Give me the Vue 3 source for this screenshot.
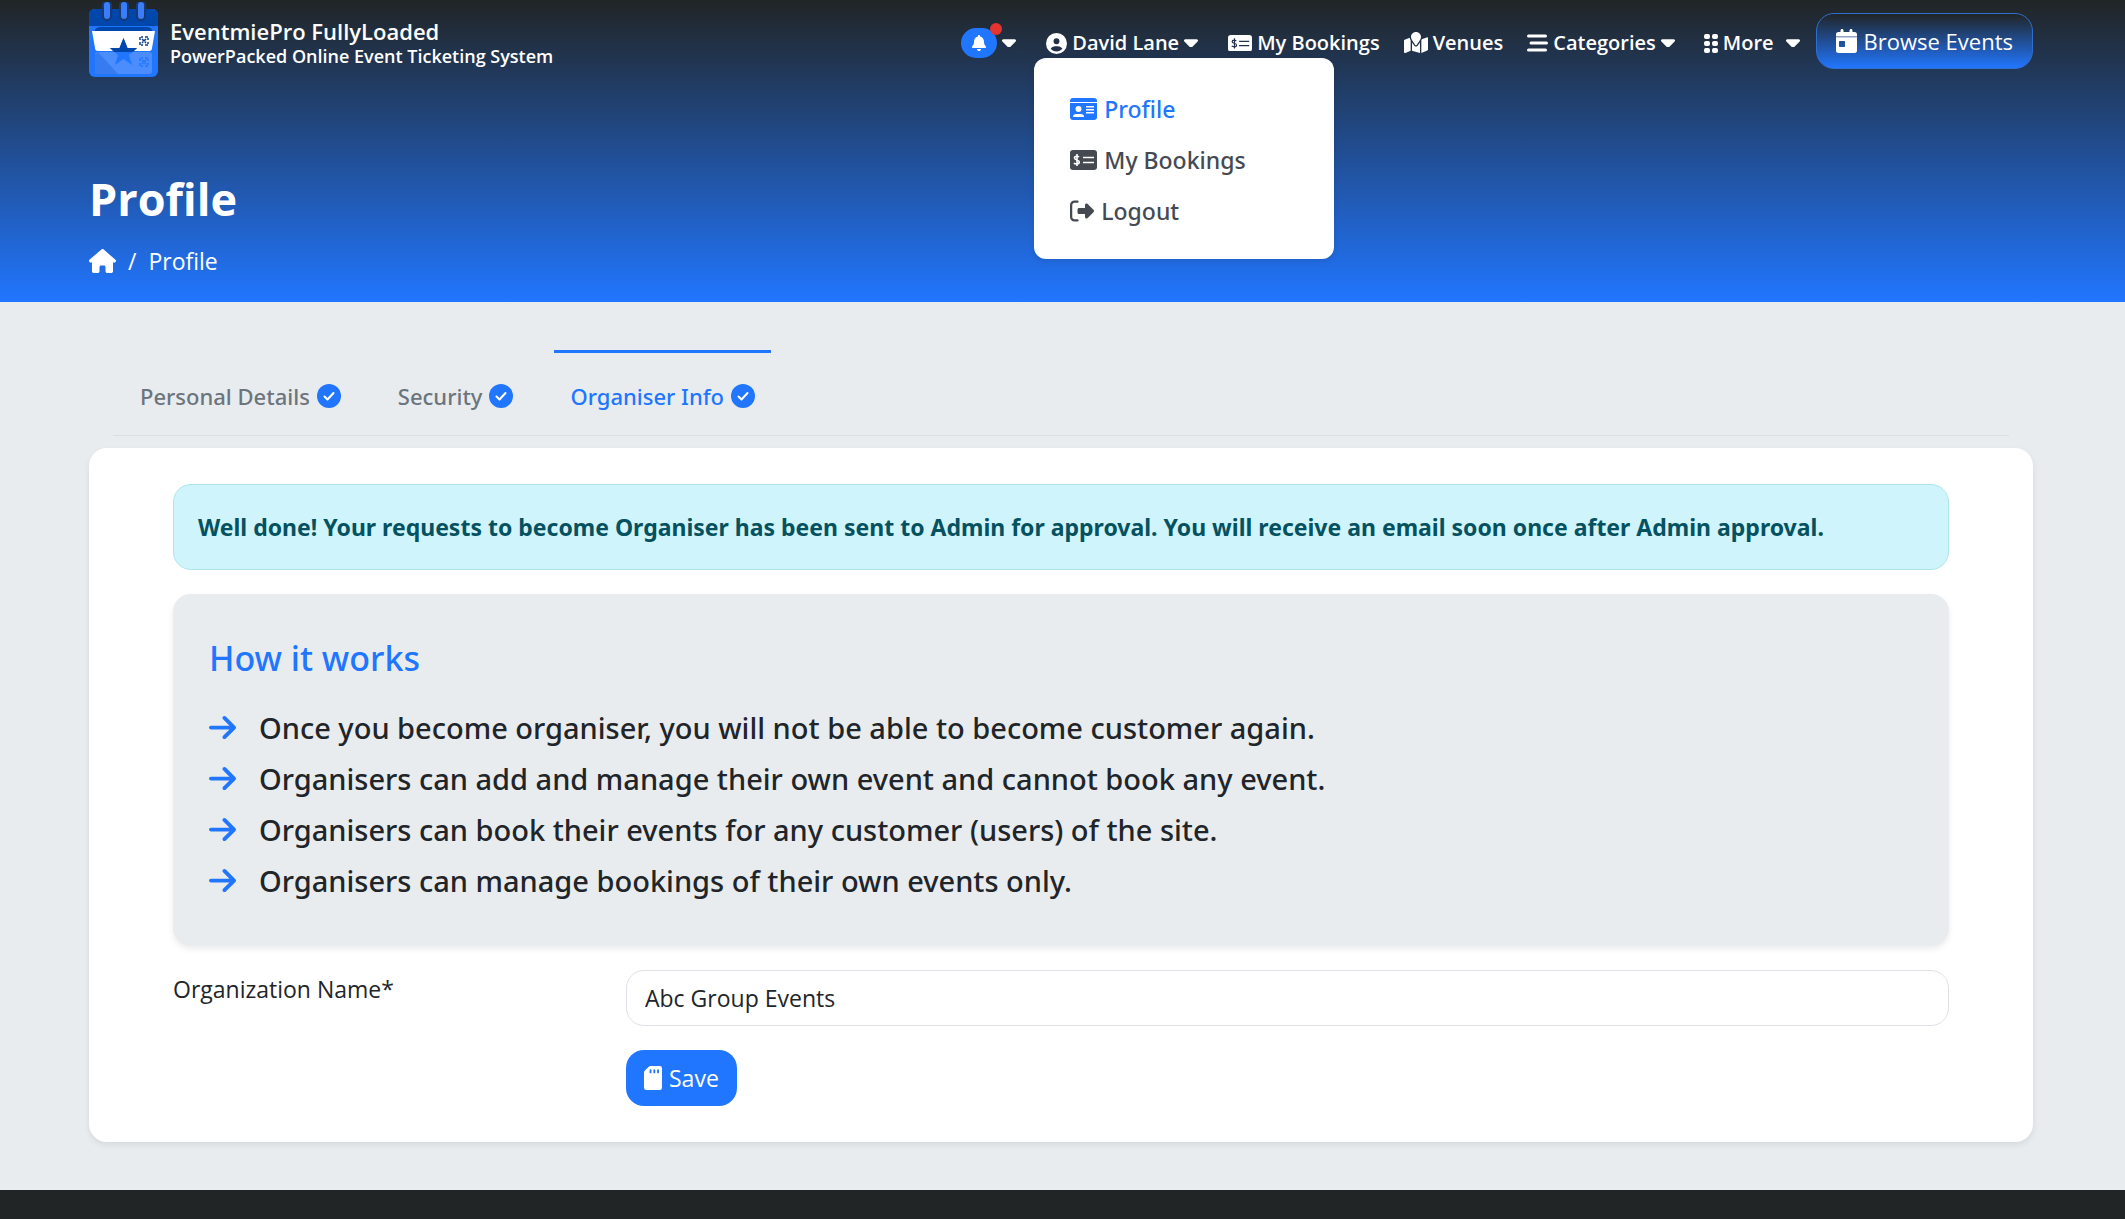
<script setup>
import { ref } from 'vue'

const organization = ref('Abc Group Events')
const tabs = [
  { label: 'Personal Details', active: false },
  { label: 'Security', active: false },
  { label: 'Organiser Info', active: true },
]
const rules = [
  'Once you become organiser, you will not be able to become customer again.',
  'Organisers can add and manage their own event and cannot book any event.',
  'Organisers can book their events for any customer (users) of the site.',
  'Organisers can manage bookings of their own events only.',
]
const caret = 'M137 375c13 12 33 12 46 0l128-128c9-9 12-23 7-35s-17-20-30-20H32c-13 0-25 8-30 20s-2 26 7 35l128 128z'
</script>

<template>
  <div class="page">
    <header class="hero">
      <div class="bar">
        <a class="brand" href="#">
          <svg class="logo" viewBox="0 0 69 75" aria-hidden="true">
            <rect x="0" y="7" width="69" height="68" rx="6" fill="#2176ff" />
            <path d="M0 24V13a6 6 0 0 1 6-6h57a6 6 0 0 1 6 6v11z" fill="#0147ab" />
            <path d="M6 30a5 4 0 0 1 5-5h47a5 4 0 0 1 5 5z" fill="#0147ab" />
            <path d="M3 29h63l-3 17a3 3 0 0 1-3 3H9a3 3 0 0 1-3-3z" fill="#fff" />
            <rect x="6" y="50" width="57" height="22" rx="3" fill="#4b8dfd" />
            <path d="M6 53l3-3 20 22H9a3 3 0 0 1-3-3z" fill="#367cf0" />
            <path d="M34.500 36l4 10H48l-8 7 3 10-8.500-6-8.500 6 3-10-8-7h9.500z" fill="#2176ff" />
            <path d="M34.500 36l4 10H48l-4 4H25l-4-4h9.500z" fill="#0147ab" />
            <g fill="none" stroke-width="1.500" stroke-dasharray="3 1">
              <path d="M51 38v-3h3M56 35h3v3M51 40v3h3M56 43h3v-3M53 37l4 4M57 37l-4 4" stroke="#0c3f94" />
              <path d="M51 59v-3h3M56 56h3v3M51 61v3h3M56 64h3v-3M53 58l4 4M57 58l-4 4" stroke="#2176ff" />
            </g>
            <g stroke-linecap="round">
              <path d="M18 3v11M35 3v11M52 3v11" stroke="#173a72" stroke-width="10" />
              <path d="M18 3v11M35 3v11M52 3v11" stroke="#3a7dfa" stroke-width="6" />
            </g>
          </svg>
          <span class="brand-text">
            <span class="brand-name">EventmiePro FullyLoaded</span>
            <span class="brand-tag">PowerPacked Online Event Ticketing System</span>
          </span>
        </a>

        <nav class="nav" aria-label="Main">
          <button class="nav-item has-caret" type="button" aria-label="Notifications">
            <span class="bell">
              <svg viewBox="0 0 448 512"><path d="M224 0c-17.700 0-32 14.300-32 32V51.200C119 66 64 130.600 64 208v18.800c0 47-17.300 92.400-48.500 127.600l-7.400 8.300c-8.400 9.400-10.400 22.900-5.300 34.400S19.400 416 32 416H416c12.600 0 24-7.400 29.200-18.900s3.100-25-5.300-34.400l-7.400-8.300C401.300 319.200 384 273.900 384 226.800V208c0-77.400-55-142-128-156.800V32c0-17.700-14.300-32-32-32zm45.300 493.300c12-12 18.700-28.300 18.700-45.300H160c0 17 6.700 33.300 18.700 45.300s28.300 18.700 45.300 18.700 33.300-6.700 45.300-18.700z" /></svg>
              <span class="dot"></span>
            </span>
            <svg class="caret" viewBox="0 188 320 200"><path :d="caret" /></svg>
          </button>

          <div class="account">
            <button class="nav-item has-caret" type="button" aria-expanded="true">
              <svg class="i21" viewBox="0 0 512 512"><path d="M399 384.200C376.900 345.800 335.400 320 288 320H224c-47.400 0-88.900 25.800-111 64.200c35.200 39.200 86.200 63.800 143 63.800s107.800-24.700 143-63.800zM0 256a256 256 0 1 1 512 0A256 256 0 1 1 0 256zm256 16a72 72 0 1 0 0-144 72 72 0 1 0 0 144z" fill-rule="evenodd" /></svg>
              David Lane
              <svg class="caret" viewBox="0 188 320 200"><path :d="caret" /></svg>
            </button>
            <div class="menu">
              <a class="current" href="#">
                <svg class="i27" viewBox="0 0 27 22"><path fill-rule="evenodd" d="M0 4V3a3 3 0 0 1 3-3h21a3 3 0 0 1 3 3v1zM0 5h27v14a3 3 0 0 1-3 3H3a3 3 0 0 1-3-3zM8.500 8a3 3 0 1 0 0 6 3 3 0 1 0 0-6zM3 19h11a3 3 0 0 0-3-3H6a3 3 0 0 0-3 3zM16 8h8v1.500h-8zM16 11h8v1.500h-8zM16 14h8v1.500h-8z" /></svg>
                Profile
              </a>
              <a href="#">
                <svg class="i27" viewBox="0 0 27 20"><rect width="27" height="20" rx="3" /><path d="M9 7C8 6 4.500 5.500 4.500 8S9.300 9.500 9.300 12 5 14.500 4 13M7 4v12M13 7.500h11M13 12.500h11" fill="none" stroke="#fff" stroke-width="1.600" /></svg>
                My Bookings
              </a>
              <a href="#">
                <svg class="i24" viewBox="0 0 512 512"><path d="M377.900 105.900L500.700 228.700c7.200 7.200 11.300 17.100 11.300 27.300s-4.100 20.100-11.300 27.300L377.900 406.100c-6.400 6.400-15 9.900-24 9.900c-18.700 0-33.900-15.200-33.900-33.900V320H192c-17.700 0-32-14.300-32-32v-64c0-17.700 14.300-32 32-32h128v-62.100c0-18.700 15.200-33.900 33.900-33.900c9 0 17.600 3.600 24 9.900zM160 80H96c-26 0-48 22-48 48v256c0 26 22 48 48 48h64c13 0 24 11 24 24s-11 24-24 24H96c-53 0-96-43-96-96V128C0 75 43 32 96 32h64c13 0 24 11 24 24s-11 24-24 24z" /></svg>
                Logout
              </a>
            </div>
          </div>

          <a class="nav-item" href="#">
            <svg class="i24" viewBox="0 0 26 18"><rect width="26" height="18" rx="3" /><path d="M9 6.500C8 5.500 4.500 5 4.500 7.200S9.300 8.500 9.300 11 5 13 4 11.800M7 3.500v11M12 7h11M12 11.500h11" fill="none" stroke="#21324f" stroke-width="1.300" /></svg>
            My Bookings
          </a>
          <a class="nav-item" href="#">
            <svg class="i24" viewBox="0 0 576 512"><path d="M408 120c0 54.600-73.100 151.900-105.200 192c-7.700 9.600-22 9.600-29.600 0C241.100 271.900 168 174.600 168 120C168 53.700 221.700 0 288 0s120 53.700 120 120zm8 80.400c3.500-6.900 6.700-13.800 9.600-20.600l1.500-3.700 116-46.400C558.900 123.400 576 135 576 152V422.800c0 9.800-6 18.600-15.100 22.300L416 503zM137.600 138.300c2.400 14.100 7.200 28.300 12.800 41.500c2.900 6.800 6.100 13.700 9.600 20.600V451.800L32.900 502.700C17.100 509 0 497.400 0 480.400V209.600c0-9.800 6-18.600 15.100-22.300zM327.800 332c13.900-17.400 35.700-45.700 56.200-77V504.300L192 449.400V255c20.500 31.300 42.300 59.600 56.200 77c20.500 25.600 59.100 25.600 79.600 0z" /></svg>
            Venues
          </a>
          <button class="nav-item" type="button">
            <svg class="i21" viewBox="0 0 21 18"><path d="M1.500 2h17M4 9h15.500M1.500 16h17" fill="none" stroke="currentColor" stroke-width="3" stroke-linecap="round" /></svg>
            Categories
            <svg class="caret" viewBox="0 188 320 200"><path :d="caret" /></svg>
          </button>
          <button class="nav-item more" type="button">
            <svg class="i14" viewBox="0 0 14 19"><rect width="6" height="5" rx="2" /><rect x="8" width="6" height="5" rx="2" /><rect y="7" width="6" height="5" rx="2" /><rect x="8" y="7" width="6" height="5" rx="2" /><rect y="14" width="6" height="5" rx="2" /><rect x="8" y="14" width="6" height="5" rx="2" /></svg>
            More
            <svg class="caret" viewBox="0 188 320 200"><path :d="caret" /></svg>
          </button>
          <a class="browse" href="#">
            <svg class="i21" viewBox="0 0 448 512"><path d="M128 0c17.700 0 32 14.300 32 32V64H288V32c0-17.700 14.300-32 32-32s32 14.300 32 32V64h48c26.500 0 48 21.500 48 48v48H0V112C0 85.500 21.500 64 48 64H96V32c0-17.700 14.300-32 32-32zM0 176H448V464c0 26.500-21.500 48-48 48H48c-26.500 0-48-21.500-48-48zm80 80c-8.800 0-16 7.200-16 16v96c0 8.800 7.200 16 16 16h96c8.800 0 16-7.200 16-16V272c0-8.800-7.200-16-16-16z" fill-rule="evenodd" /></svg>
            Browse Events
          </a>
        </nav>
      </div>

      <h1>Profile</h1>
      <nav class="crumbs" aria-label="Breadcrumb">
        <a href="#" aria-label="Home">
          <svg class="i27" viewBox="0 0 576 512"><path d="M575.800 255.500c0 18-15 32.100-32 32.100h-32l.7 160.200V472c0 22.100-17.900 40-40 40H392c-22.100 0-40-17.900-40-40V384c0-17.700-14.300-32-32-32H256c-17.700 0-32 14.300-32 32v88c0 22.100-17.900 40-40 40H104c-22.100 0-40-17.900-40-40V287.600H32c-18 0-32-14-32-32.100c0-9 3-17 10-24L266.400 8c7-7 15-8 22-8s15 2 21 7L564.800 231.500c8 7 12 15 11 24z" /></svg>
        </a>
        <span>/</span>
        <span>Profile</span>
      </nav>
    </header>

    <main class="content">
      <nav class="tabs" aria-label="Profile sections">
        <a v-for="tab in tabs" :key="tab.label" href="#" :class="{ active: tab.active }">
          {{ tab.label }}
          <svg class="i24" viewBox="0 0 24 24"><circle cx="12" cy="12" r="12" fill="#2176ff" /><path d="M7.500 12.500l3 3 6-6.500" fill="none" stroke="#fff" stroke-width="2" stroke-linecap="round" stroke-linejoin="round" /></svg>
        </a>
      </nav>

      <section class="card">
        <div class="alert" role="status">
          Well done! Your requests to become Organiser has been sent to Admin for approval. You will receive an email soon once after Admin approval.
        </div>

        <div class="panel">
          <h2>How it works</h2>
          <ul>
            <li v-for="rule in rules" :key="rule">
              <svg class="i27" viewBox="0 0 448 384"><path d="M439 215c12-13 12-33 0-46L279 9c-13-12-33-12-46 0s-12 33 0 46l106 105H32c-18 0-32 14-32 32s14 32 32 32h307L233 329c-12 13-12 33 0 46s33 12 46 0z" /></svg>
              {{ rule }}
            </li>
          </ul>
        </div>

        <form class="form" @submit.prevent>
          <label for="organization">Organization Name*</label>
          <input id="organization" v-model="organization" type="text" />
          <button class="save" type="submit">
            <svg class="i18" viewBox="0 0 384 512"><path fill-rule="evenodd" d="M336 0H141C124 0 108 7 96 19L19 96C7 108 0 124 0 141V464a48 48 0 0 0 48 48H336a48 48 0 0 0 48-48V48a48 48 0 0 0-48-48zM120 88a20 20 0 0 1 40 0v48a20 20 0 0 1-40 0zM200 88a20 20 0 0 1 40 0v48a20 20 0 0 1-40 0zM280 88a20 20 0 0 1 40 0v48a20 20 0 0 1-40 0z" /></svg>
            Save
          </button>
        </form>
      </section>
    </main>

    <footer class="footer"></footer>
  </div>
</template>

<style>
body {
  background: #e8ecef;
}
</style>

<style scoped>
.page {
  display: flex;
  flex-direction: column;
  min-height: 100vh;
  font-family: "Open Sans", "Noto Sans", sans-serif;
  font-size: 23px;
  line-height: 36px;
  color: #212529;
}
.page * {
  box-sizing: border-box;
}
a {
  color: inherit;
  text-decoration: none;
}
button {
  font: inherit;
  color: inherit;
  background: none;
  border: 0;
  padding: 0;
  cursor: pointer;
}
svg {
  flex: none;
  fill: currentColor;
}
.i14 { width: 14px; }
.i18 { width: 18px; }
.i21 { width: 21px; }
.i24 { width: 24px; }
.i27 { width: 27px; }

.hero {
  padding: 0 92px 23px 89px;
  color: #fff;
  background: linear-gradient(#212526, #2176ff);
}
.bar {
  display: flex;
  justify-content: space-between;
  height: 84px;
}
.brand {
  display: flex;
  align-items: flex-start;
  gap: 12px;
  padding-top: 2px;
  font-weight: 600;
  white-space: nowrap;
}
.logo {
  width: 69px;
  height: 75px;
}
.brand-text {
  display: flex;
  flex-direction: column;
  padding-top: 16px;
}
.brand-name {
  font-size: 22px;
  line-height: 26px;
}
.brand-tag {
  font-size: 18px;
  line-height: 24px;
}
.nav {
  display: flex;
  align-items: center;
  gap: 24px;
  height: 82px;
  font-size: 20px;
  font-weight: 600;
  white-space: nowrap;
}
.nav-item {
  display: flex;
  align-items: center;
  gap: 5px;
  padding-top: 4px;
}
.has-caret {
  margin-right: 6px;
}
.more {
  margin: 0 -8px 0 5px;
}
.more .caret {
  margin-left: 7px;
}
.caret {
  width: 14px;
}
.bell {
  position: relative;
  display: flex;
  align-items: center;
  justify-content: center;
  width: 36px;
  height: 30px;
  border-radius: 15px;
  background: #2176ff;
}
.bell svg {
  width: 14px;
}
.dot {
  position: absolute;
  top: -5px;
  right: -5px;
  width: 12px;
  height: 12px;
  border-radius: 50%;
  background: #e3342f;
}
.account {
  position: relative;
}
.menu {
  position: absolute;
  top: 37px;
  left: -12px;
  width: 300px;
  padding: 25px 36px 23px;
  border-radius: 12px;
  background: #fff;
  box-shadow: 0 2px 6px rgba(0, 0, 0, 0.1);
  color: #454a52;
  font-family: "Noto Sans", sans-serif;
  font-size: 23px;
  font-weight: 500;
}
.menu a {
  display: flex;
  align-items: center;
  gap: 7px;
  height: 51px;
}
.menu .current {
  color: #2176ff;
}
.browse {
  display: flex;
  align-items: center;
  gap: 7px;
  height: 56px;
  padding: 0 19px;
  border: 1px solid #2f6fd0;
  border-radius: 18px;
  background: linear-gradient(#212526, #2176ff);
  font-size: 22px;
  font-weight: 400;
}
h1 {
  margin: 80px 0 0;
  font-size: 45px;
  line-height: 70px;
  font-weight: 700;
}
.crumbs {
  display: flex;
  align-items: center;
  gap: 12px;
  margin-top: 9px;
}
.crumbs a {
  display: flex;
}

.content {
  flex: 1;
  padding: 48px 92px 48px 89px;
  background: #e8ecef;
}
.tabs {
  display: flex;
  gap: 25px;
  margin: 0 24px 12px;
  border-bottom: 1px solid #dce0e4;
  color: #6c757d;
  font-family: "Noto Sans", sans-serif;
  font-size: 22px;
  font-weight: 500;
}
.tabs a {
  display: flex;
  align-items: center;
  gap: 7px;
  height: 85px;
  padding: 4px 16px 0;
  border-top: 3px solid transparent;
}
.tabs a:first-child {
  padding-left: 27px;
}
.tabs .active {
  color: #2176ff;
  border-top-color: #2176ff;
}
.card {
  padding: 36px 84px;
  border-radius: 18px;
  background: #fff;
  box-shadow: 0 3px 6px rgba(0, 0, 0, 0.08);
}
.alert {
  padding: 25px 24px;
  border: 1px solid #aee5ec;
  border-radius: 18px;
  background: #cff4fc;
  color: #055160;
  font-family: "Noto Sans", sans-serif;
  font-size: 23px;
  font-weight: 700;
  line-height: 34px;
}
.panel {
  margin: 24px 0;
  padding: 36px 36px 40px;
  border-radius: 18px;
  background: #e8ecef;
  box-shadow: 0 3px 6px rgba(0, 0, 0, 0.08);
  font-family: "Noto Sans", sans-serif;
}
h2 {
  margin: 0 0 16px;
  color: #2176ff;
  font-size: 34px;
  line-height: 56px;
  font-weight: 500;
}
ul {
  margin: 0;
  padding: 0;
  list-style: none;
  font-size: 29px;
  font-weight: 500;
}
li {
  display: flex;
  align-items: center;
  gap: 23px;
  min-height: 51px;
}
li svg {
  color: #2176ff;
}
.form {
  display: grid;
  grid-template-columns: 1fr 3fr;
  column-gap: 12px;
  row-gap: 24px;
}
.form label {
  line-height: 38px;
}
.form input {
  width: 100%;
  height: 56px;
  padding: 0 18px;
  border: 1px solid #dee2e6;
  border-radius: 18px;
  background: #fff;
  color: inherit;
  font: inherit;
}
.save {
  grid-column: 2;
  justify-self: start;
  display: flex;
  align-items: center;
  gap: 7px;
  height: 56px;
  padding: 0 18px;
  border-radius: 18px;
  background: #2176ff;
  color: #fff;
  font-weight: 500;
}
.footer {
  height: 29px;
  background: #212526;
}
</style>
